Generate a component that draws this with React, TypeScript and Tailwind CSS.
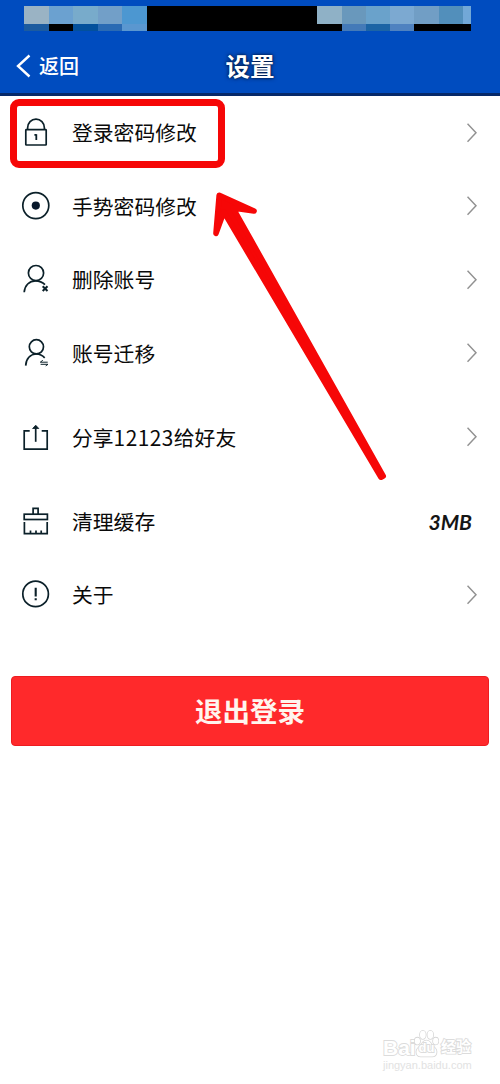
import type { ReactNode } from 'react';
import clsx from 'clsx';

interface SettingItem {
  id: string;
  label: ReactNode;
  icon: ReactNode;
  value?: string;
  spaced?: boolean;
}

const leftBlocks = [
  { top: 'bg-[#9ab3c4]', bottom: 'bg-[#1c5b9f]' },
  { top: 'bg-[#6ba1d0]', bottom: 'bg-black' },
  { top: 'bg-[#78abcb]', bottom: 'bg-[#03509c]' },
  { top: 'bg-[#729fc8]', bottom: 'bg-[#2a6ab3]' },
  { top: 'bg-[#4c97d1]', bottom: 'bg-[#5a97d0]' },
];

const rightBlocks = [
  { top: 'bg-[#8fb1c6]', bottom: 'bg-black' },
  { top: 'bg-[#6998bc]', bottom: 'bg-[#447ab8]' },
  { top: 'bg-[#6aa2cb]', bottom: 'bg-[#1c64a5]' },
  { top: 'bg-[#7ca9d1]', bottom: 'bg-[#4f82c0]' },
  { top: 'bg-[#719ec5]', bottom: 'bg-black' },
  { top: 'bg-[#528fbb]', bottom: 'bg-black' },
];

function Icon({ children }: { children: ReactNode }) {
  return (
    <svg
      viewBox="0 0 32 32"
      className="mt-px h-8 w-8 shrink-0 overflow-visible"
      fill="none"
      stroke="#0b2029"
      strokeWidth="1.7"
    >
      {children}
    </svg>
  );
}

const items: SettingItem[] = [
  {
    id: 'password',
    label: '登录密码修改',
    icon: (
      <Icon>
        <rect x="5.8" y="12.6" width="20.4" height="15.4" rx="0.6" />
        <path d="M7.6 12.6v-1.6a8.4 8.9 0 0 1 16.8 0v1.6" />
        <path d="M16.3 17.2v5.8M14.4 17.9h2" strokeWidth="1.8" />
      </Icon>
    ),
  },
  {
    id: 'gesture',
    label: '手势密码修改',
    icon: (
      <Icon>
        <circle cx="15.8" cy="14.6" r="13" />
        <circle cx="15.8" cy="14.6" r="4.1" fill="#08182b" stroke="none" />
      </Icon>
    ),
  },
  {
    id: 'delete',
    label: '删除账号',
    icon: (
      <Icon>
        <circle cx="16" cy="9.1" r="7.6" />
        <path d="M4.2 28.3C4.6 21.5 9.4 16.8 15.5 16.8c3.8 0 7 1.4 9.5 3.9" />
        <path d="m22.7 22.2 4.8 4.8m0-4.8-4.8 4.8" strokeWidth="2" />
      </Icon>
    ),
  },
  {
    id: 'migrate',
    label: '账号迁移',
    icon: (
      <Icon>
        <circle cx="16.4" cy="8.8" r="7.1" />
        <path d="M5.7 27.6C6 20.8 10.3 16 16.2 16c3.4 0 6.2 1.3 8.5 3.8" />
        <path d="M20.3 24.2h7.4M20.3 24.2l2.5-1.9M20.6 26.3h7.4l-2.3 1.6" strokeWidth="1" />
      </Icon>
    ),
  },
  {
    id: 'share',
    label: (
      <>
        分享<span className="tracking-[0.5px]">12123</span>给好友
      </>
    ),
    spaced: true,
    icon: (
      <Icon>
        <path d="M9.7 8.9H4.2v18.2h23V8.9h-5.5" />
        <path d="M15.7 19.8V4" />
        <path d="m12.6 6.5 3.1-3.3 3.1 3.3z" fill="#0b2029" strokeWidth="0.8" />
      </Icon>
    ),
  },
  {
    id: 'cache',
    label: '清理缓存',
    value: '3MB',
    spaced: true,
    icon: (
      <Icon>
        <path d="M13.1 8V2.3h5V8" />
        <rect x="4.2" y="8.2" width="23.2" height="5.3" />
        <path d="M4.4 16v11.6h22.8V16M10.5 27.6v-3M16 27.6v-3M21.2 27.6v-3" />
      </Icon>
    ),
  },
  {
    id: 'about',
    label: '关于',
    icon: (
      <Icon>
        <circle cx="15.6" cy="14.9" r="12.8" />
        <path d="M15.7 8.8v8.8M15.7 19.2v2.1" strokeWidth="2.1" />
      </Icon>
    ),
  },
];

function Block({ top, bottom, className }: { top: string; bottom: string; className: string }) {
  return (
    <div className={clsx('flex flex-col', className)}>
      <div className={clsx('h-[18.5px]', top)} />
      <div className={clsx('flex-1', bottom)} />
    </div>
  );
}

function Header() {
  return (
    <header className="h-24 border-b-[3px] border-[#062969] bg-[#004cbf] pt-[5.5px] text-white">
      <div className="mr-[29.5px] ml-6 flex h-[25.5px] bg-black">
        {leftBlocks.map((block, i) => (
          <Block key={i} {...block} className="w-[24.5px]" />
        ))}
        <div className="flex-1" />
        {rightBlocks.map((block, i) => (
          <Block key={i} {...block} className="w-[24.3px]" />
        ))}
        <Block top="bg-[#72a8d7]" bottom="bg-black" className="w-[7.5px]" />
      </div>

      <div className="grid h-[70px] grid-cols-[1fr_auto_1fr] items-center [text-shadow:0_0_4px_#001a44,0_0_2px_#001a44]">
        <button className="flex items-center gap-2 pl-4 text-[20px] leading-none font-medium">
          <svg viewBox="0 0 15 24" className="h-6 w-[15px]" fill="none" stroke="white" strokeWidth="2.4">
            <path d="M13.5 1.5 2 12l11.5 10.5" />
          </svg>
          返回
        </button>
        <h1 className="pt-px text-[24.5px] leading-none font-bold">设置</h1>
      </div>
    </header>
  );
}

function SettingRow({ item }: { item: SettingItem }) {
  return (
    <li className={clsx('flex h-[73.5px] items-center pr-[23px] pl-5', item.spaced && 'mt-[10.5px]')}>
      {item.icon}
      <span className="ml-5 flex-1 text-[20.8px] leading-none text-[#0a0a0a]">{item.label}</span>
      {item.value ? (
        <span className="mr-[5px] pt-px font-['Lato','Noto_Sans_CJK_SC',sans-serif] text-[21px] leading-none font-bold text-[#151515] italic">
          {item.value}
        </span>
      ) : (
        <svg viewBox="0 0 10 20" className="h-5 w-2.5 shrink-0" fill="none" stroke="#929292" strokeWidth="1.5">
          <path d="m.5 .7 8.5 9-8.5 9" />
        </svg>
      )}
    </li>
  );
}

function Watermark() {
  return (
    <div className="absolute top-[1029px] left-[383px] w-[90px] font-['Liberation_Sans','Noto_Sans_CJK_SC',sans-serif] text-white">
      <div className="flex h-[29px] items-end [paint-order:stroke] [-webkit-text-stroke:1.8px_#dcdcdc]">
        <span className="w-[31px] text-[21px] leading-[21px] font-bold">Bai</span>
        <div className="relative h-[29px] w-[25px]">
          <svg viewBox="0 0 26 29" className="h-full w-full" fill="white" stroke="#d6d6d6" strokeWidth="1.6">
            <ellipse cx="3.5" cy="12" rx="2.8" ry="3.6" />
            <ellipse cx="9.2" cy="5.5" rx="3" ry="4.2" />
            <ellipse cx="17" cy="5.5" rx="3" ry="4.2" />
            <ellipse cx="22.6" cy="12" rx="2.8" ry="3.6" />
            <path d="M13 11.5c4 0 5 4.5 8 7 4 3.5 3 9.5-2 9.5H7c-5 0-6-6-2-9.5 3-2.5 4-7 8-7z" />
          </svg>
          <span className="absolute inset-x-0 bottom-1 text-center text-[13px] leading-none font-bold">du</span>
        </div>
        <span className="pl-0.5 text-[15px] leading-[22px] font-bold">经验</span>
      </div>
      <p className="text-[11px] leading-[15px] text-[#e2e2e2]">jingyan.baidu.com</p>
    </div>
  );
}

export default function App() {
  return (
    <div className="relative h-[1084px] w-[500px] overflow-hidden bg-white font-['Noto_Sans_CJK_SC',sans-serif]">
      <Header />

      <main>
        <ul>
          {items.map((item) => (
            <SettingRow key={item.id} item={item} />
          ))}
        </ul>
        <button className="mx-[11px] mt-11 flex h-[70px] w-[478px] items-center justify-center rounded-[4px] border border-[#ed1c20] bg-[#ff292b] pt-px text-[27.5px] leading-none font-bold text-[#fff5ee]">
          退出登录
        </button>
      </main>

      {/* Highlight box and pointer */}
      <div className="absolute top-[99px] left-[10px] h-[69px] w-[215px] rounded-[9px] border-[7px] border-[#f60707]" />
      <svg
        viewBox="0 0 172 292"
        className="absolute top-[190px] left-[212px] h-[292px] w-[172px] overflow-visible"
        fill="#f60707"
        stroke="#f60707"
        strokeWidth="5.6"
        strokeLinejoin="round"
      >
        <path d="M7.2 5.2 42 21 21 18 171.2 286 169 287.2 11.8 21.9 4 43.3Z" />
      </svg>

      <Watermark />
    </div>
  );
}
